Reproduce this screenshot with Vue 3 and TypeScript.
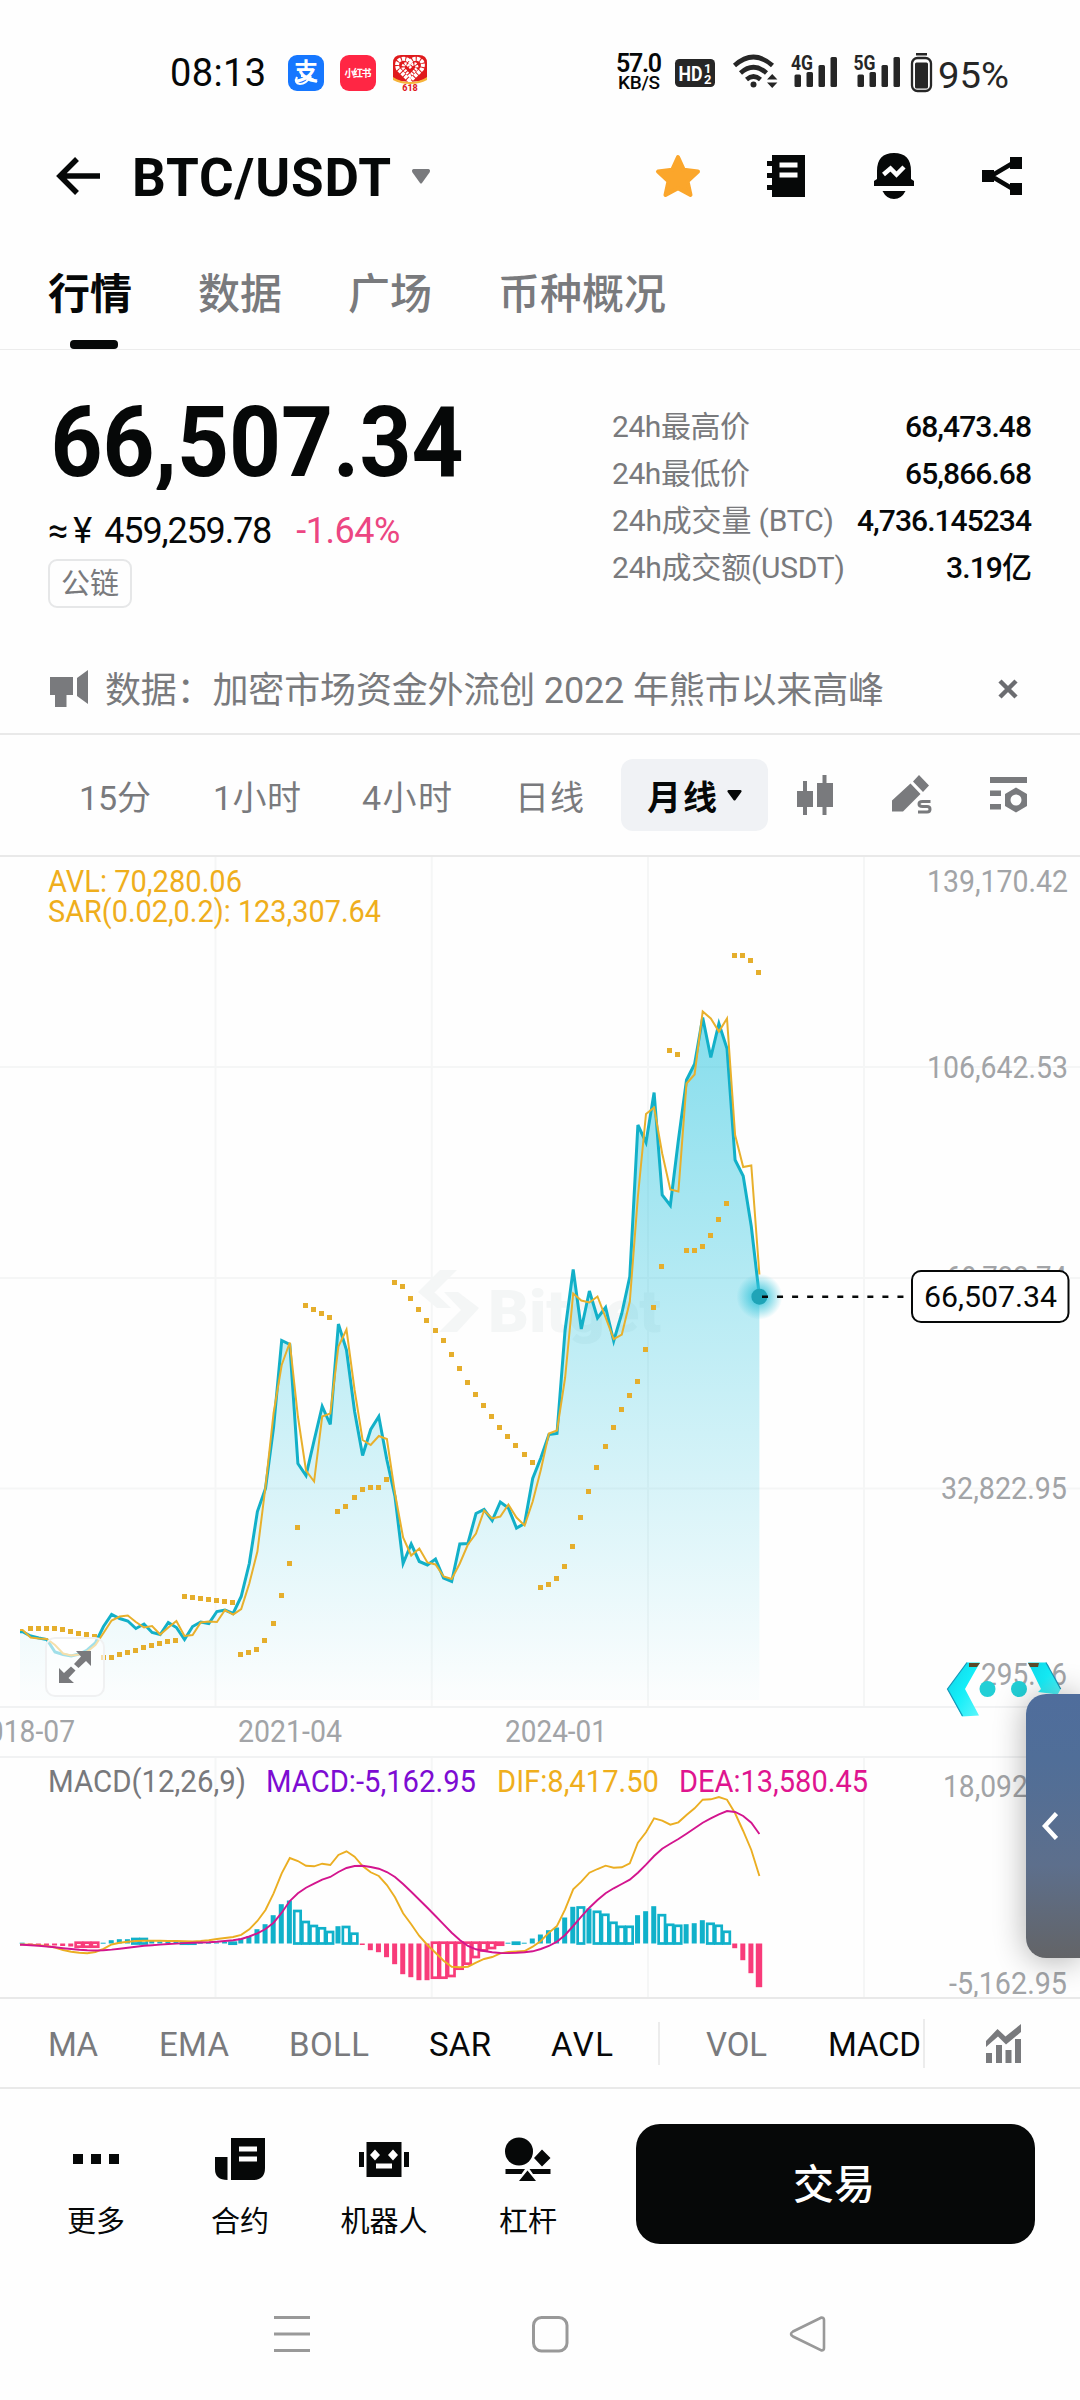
<script setup lang="ts">
import type { Directive } from 'vue'

// Tightens or loosens tracking so that a label takes the given width.
const vFit: Directive<HTMLElement, number> = {
  mounted(el, { value }) {
    const n = (el.textContent ?? '').length
    const w = el.getBoundingClientRect().width
    const ls = (value - w) / Math.max(1, n - 1)
    el.style.letterSpacing = `${ls}px`
    el.style.marginRight = `${-ls}px`
  },
}

const tabs = ['行情', '数据', '广场', '币种概况']

const stats = [
  { label: '24h最高价', lw: 138, value: '68,473.48', vw: 127 },
  { label: '24h最低价', lw: 138, value: '65,866.68', vw: 127 },
  { label: '24h成交量 (BTC)', lw: 222, value: '4,736.145234', vw: 175 },
  { label: '24h成交额(USDT)', lw: 233, value: '3.19亿', vw: 86 },
]

const frames = [
  { name: '15分', w: 72, gap: 0 },
  { name: '1小时', w: 88, gap: 62 },
  { name: '4小时', w: 90, gap: 61 },
  { name: '日线', w: 69, gap: 63 },
]

const indicators = [
  { name: 'MA', w: 50, gap: 0, on: false },
  { name: 'EMA', w: 70, gap: 61, on: false },
  { name: 'BOLL', w: 80, gap: 60, on: false },
  { name: 'SAR', w: 62, gap: 60, on: true },
  { name: 'AVL', w: 62, gap: 60, on: true },
]

const STEP = 8.097
const X_LAST = 759.4
const xAt = (i: number) => X_LAST - STEP * (91 - i)

const close = [
  1631.7, 1636, 1638, 1639.5, 1652, 1654.5, 1656, 1654, 1650, 1643, 1626.5, 1614.5, 1618.5, 1621, 1628.5, 1624,
  1632.5, 1634.5, 1622.5, 1627.5, 1639.5, 1626.5, 1622, 1623.5, 1611.5, 1610, 1613.5, 1596.5, 1563.5, 1511.5,
  1488.5, 1427, 1340.5, 1344.5, 1463.5, 1475.5, 1440.5, 1406.5, 1424.5, 1324, 1350, 1411.5, 1455.5, 1429.5,
  1416.5, 1460, 1496.5, 1563.5, 1544, 1561.5, 1565, 1559, 1578, 1581.5, 1544, 1543.5, 1513.5, 1509.5, 1520.5,
  1502, 1508, 1528, 1523.5, 1478.5, 1458, 1434.5, 1433.5, 1330, 1269.5, 1329, 1291, 1318, 1307.5, 1341, 1313.5,
  1276.5, 1125, 1142.5, 1092.5, 1195, 1205.5, 1140, 1080, 1064, 1017.5, 1057.5, 1023.5, 1048.5, 1160, 1176,
  1226.5, 1296.5,
]

const avl = [
  1630, 1637.5, 1638.5, 1639, 1645, 1653.5, 1655.5, 1654.5, 1651.5, 1645, 1633, 1620.5, 1616.5, 1615.5, 1622,
  1627.5, 1626, 1634.5, 1627.5, 1621, 1636, 1635, 1622.5, 1621.5, 1622, 1610, 1614.5, 1609, 1583.5, 1551.5,
  1486.5, 1413, 1365, 1342.5, 1416.5, 1470.5, 1481.5, 1416.5, 1413.5, 1346.5, 1329.5, 1390, 1440, 1445, 1436,
  1439, 1493.5, 1537.5, 1555.5, 1548.5, 1562.5, 1564.5, 1576.5, 1579, 1563.5, 1544.5, 1533.5, 1510.5, 1518.5,
  1516.5, 1504.5, 1517.5, 1525.5, 1501.5, 1470, 1433.5, 1430.5, 1378, 1293.5, 1300.5, 1302.5, 1296.5, 1317.5,
  1339, 1334.5, 1301.5, 1196.5, 1114, 1107.5, 1153.5, 1189.5, 1191.5, 1083.5, 1074.5, 1011.5, 1018.5, 1031.5,
  1018.5, 1135, 1167, 1165.5, 1274.5,
]

// Parabolic SAR, from the second month on.
const sar = [
  1628, 1628, 1628.7, 1628.7, 1629.7, 1631.3, 1633, 1634.3, 1636,
  1657.3, 1657, 1654.3, 1652, 1650, 1647.3, 1645.7, 1643.3, 1641.3, 1640,
  1596, 1597, 1598, 1599.7, 1600.3, 1601.7, 1602.7,
  1654, 1652.7, 1649, 1640, 1623.3, 1595.3, 1563, 1527,
  1305.3, 1309.3, 1313.3, 1317.3,
  1511, 1506.7, 1497.7, 1489, 1487.7, 1487.7, 1479.3,
  1282, 1286.3, 1298, 1309.3, 1320, 1330, 1340, 1354.3, 1368.3, 1382, 1394, 1405.3, 1416.7, 1427, 1436.7, 1445.7,
  1454, 1462.3,
  1587, 1584.3, 1578, 1566.7, 1546.3, 1517.3, 1491, 1467.7, 1446, 1427, 1409.3, 1395.7, 1381.3, 1349, 1307.7,
  1266.7,
  1050, 1054,
  1250.7, 1250.7, 1246, 1235, 1219, 1203.3,
  955.3, 955.3, 960.7, 972,
]

const dif = [
  1944.5, 1944.7, 1945.2, 1946, 1947.5, 1950, 1951.7, 1952.8, 1953.2, 1952, 1948.8, 1944.5, 1942.8, 1941.7, 1941,
  1940.8, 1940.7, 1940.8, 1941, 1941, 1941.3, 1941.5, 1941, 1940.3, 1939, 1938, 1937, 1934.8, 1929.3, 1921, 1910,
  1893.3, 1873.3, 1858, 1861, 1865.7, 1866.3, 1863.7, 1865, 1855, 1851.3, 1856.7, 1866, 1872.3, 1876, 1885,
  1897.3, 1913.3, 1924.3, 1936, 1945, 1952.7, 1960.7, 1966.7, 1967.3, 1966.7, 1962.7, 1959, 1957, 1953.3, 1952,
  1951.5, 1951, 1946.7, 1941, 1932.7, 1926, 1909.3, 1889.3, 1881.7, 1872.7, 1869, 1865.7, 1867.7, 1867.3, 1863.3,
  1842.7, 1832.3, 1818.3, 1820.7, 1824.7, 1822.3, 1815, 1808.3, 1799.7, 1799.3, 1797, 1799.7, 1813.3, 1831, 1850,
  1876,
]

const dea = [
  1944.7, 1945.2, 1945.8, 1946.5, 1947.3, 1948.2, 1949, 1949.7, 1950.2, 1950.5, 1950.2, 1949.6, 1948.7, 1947.7,
  1946.7, 1945.8, 1945.2, 1944.6, 1944, 1943.6, 1943.1, 1942.8, 1942.5, 1942.2, 1941.7, 1941, 1940.2, 1939,
  1936.5, 1933.3, 1929, 1922.7, 1912.7, 1901, 1893.3, 1887.7, 1883.7, 1879.7, 1877, 1872, 1868, 1866, 1865.7,
  1867, 1868.7, 1872, 1877, 1884, 1891.7, 1899.7, 1907.7, 1916, 1924.3, 1932.7, 1940, 1946, 1949.3, 1951, 1952.3,
  1953, 1953.1, 1952.8, 1952.3, 1951.3, 1949, 1946, 1941.7, 1935, 1926, 1916.7, 1907.7, 1900, 1893.3, 1888.3,
  1884, 1879.7, 1872.7, 1864.7, 1856, 1848.7, 1843.7, 1839, 1833.7, 1828.3, 1822.7, 1818.3, 1814.3, 1811, 1812,
  1816, 1822.7, 1834,
]

// Histogram heights; positive is up. A trailing "h" marks a hollow bar.
const hist = (
  '0.8 -1.5 -1.5 -2 -2 -2.5 -3 -4h -4h -4h 0.8 3.3 4.3 4.3 4.5h 4.5h 3 2 2 1.5 -0.7h -0.7h 0.8 0.8 1 1.5 -1h ' +
  '5 7.3 14.3 19.3 28.3 39.3 43 32.5h 21.5h 17.5h 15.2h 11.5h 17.3 16.5h 9.8h -1.5 -6.7 -8.7 -13.7 -20.7 -30.7 ' +
  '-33.7 -36.7 -36.7 -35h -35h -33.3h -26h -21h -14.3h -7.7h -5.3h -2h 0.8 -0.8h 0.8 5 9 13.3 16 26 36.7 36h ' +
  '35 31.7h 28.7h 20.7h 16.7h 16.7h 28.3 32.3 37.3 28.3h 18.7h 17.7h 19.3 20.3 23.3 19.7h 17.7h 11.7h -4.7 -16.7 ' +
  '-29.7 -43.7'
).split(' ')

const ZERO = 1943.5
const bars = hist.map((s, i) => {
  const v = parseFloat(s)
  const hollow = s.endsWith('h')
  const w = hollow || i === 91 ? 6.4 : 5
  return {
    x: xAt(i) - w / 2 - 0.4,
    w,
    y: v > 0 ? ZERO - v : ZERO - (hollow ? 0.8 : 0),
    h: Math.max(1, Math.abs(v)),
    hollow,
    color: v > 0 || Math.abs(v) < 1.2 ? '#10b1ca' : '#f83b7a',
  }
})

const line = (ys: number[]) => `20,${ys[0]} ` + ys.map((y, i) => `${xAt(i).toFixed(1)},${y}`).join(' ')
const area = `20,1700 ${line(close)} ${X_LAST},1700`

const gridX = [215.5, 431.8, 648, 864]
const gridY = [1067, 1278, 1488.5]

const axis = [
  { t: '139,170.42', x: 927, w: 141, y: 892 },
  { t: '106,642.53', x: 927, w: 141, y: 1078 },
  { t: '69,732.74', x: 946, w: 121, y: 1288 },
  { t: '32,822.95', x: 941, w: 126, y: 1499 },
  { t: '295.06', x: 981, w: 86, y: 1685 },
  { t: '18,092.78', x: 943, w: 124, y: 1797 },
  { t: '-5,162.95', x: 949, w: 118, y: 1994 },
  { t: '2018-07', x: -28, w: 103, y: 1742 },
  { t: '2021-04', x: 238, w: 104, y: 1742 },
  { t: '2024-01', x: 505, w: 102, y: 1742 },
]

const legend = [
  { t: 'AVL: 70,280.06', x: 48, w: 194, y: 892, c: '#efae1c' },
  { t: 'SAR(0.02,0.2): 123,307.64', x: 48, w: 333, y: 922, c: '#efae1c' },
  { t: 'MACD(12,26,9)', x: 48, w: 198, y: 1792, c: '#78797c' },
  { t: 'MACD:-5,162.95', x: 266, w: 210, y: 1792, c: '#7d0cd2' },
  { t: 'DIF:8,417.50', x: 497, w: 162, y: 1792, c: '#efae1c' },
  { t: 'DEA:13,580.45', x: 679, w: 189, y: 1792, c: '#df148f' },
]
</script>

<template>
  <div class="screen">
    <header class="status">
      <span v-fit="96" class="clock">08:13</span>
      <svg class="app alipay" width="36" height="36" viewBox="0 0 36 36">
        <rect width="36" height="36" rx="9" fill="#1677ff" />
        <text x="18" y="25" text-anchor="middle" font-size="24" font-weight="700" fill="#fff">支</text>
        <path d="M9 22q-3 6 3 7 6 0 11-8M13 21q8 0 16 6" fill="none" stroke="#fff" stroke-width="2.200" />
      </svg>
      <svg class="app" width="36" height="36" viewBox="0 0 36 36">
        <rect width="36" height="36" rx="9" fill="#ff2644" />
        <text x="4.500" y="22" textLength="27" font-size="10" font-weight="700" fill="#fff">小红书</text>
      </svg>
      <svg class="app" width="36" height="38" viewBox="0 0 36 38">
        <path d="M9 1h18q8 0 8 8v16q-8 3-17 3T1 25V9q0-8 8-8z" fill="#e01a1c" />
        <path d="M18 27L6 15q-3-8 4-10 5-1 8 3 3-4 8-3 7 2 4 10z" fill="none" stroke="#fff" stroke-width="4" stroke-dasharray="3.200 1" />
        <path d="M18 22l-7-8q0-5 4-4l3 3 3-3q4-1 4 4z" fill="none" stroke="#fff" stroke-width="3" stroke-dasharray="2 1" />
        <path d="M1 23q7 5 17 5t17-5v3q-7 4-17 4T1 26z" fill="#f6b43a" />
        <text x="18" y="37" text-anchor="middle" font-size="9" font-weight="800" fill="#e01a1c">618</text>
      </svg>
      <div class="speed">
        <b v-fit="46">57.0</b>
        <span v-fit="42">KB/S</span>
      </div>
      <svg class="sys" width="336" height="46" viewBox="672 50 336 46">
        <rect x="675" y="59" width="40" height="28" rx="4.500" fill="#262626" />
        <g fill="#fff" font-weight="700">
          <text x="678.500" y="81" font-size="21" textLength="24" lengthAdjust="spacingAndGlyphs">HD</text>
          <text x="704" y="73" font-size="13">1</text>
          <text x="704" y="84" font-size="13">2</text>
        </g>
        <g fill="none" stroke="#262626" stroke-width="4.600">
          <path d="M734.500 65.500Q753.500 48.500 772.500 65.500" />
          <path d="M740.500 73Q753.500 61.500 766.500 73" />
          <path d="M746.500 79.500Q753.500 73.500 760.500 79.500" />
        </g>
        <circle cx="753.500" cy="84.500" r="3" fill="#262626" />
        <path d="M767 79.500l5.200-5.500 5.200 5.500zM767 82.500l5.200 5.500 5.200-5.500z" fill="#262626" />
        <g fill="#262626" font-weight="700" font-size="20">
          <text x="791" y="70" textLength="22" lengthAdjust="spacingAndGlyphs">4G</text>
          <text x="853.500" y="70" textLength="22" lengthAdjust="spacingAndGlyphs">5G</text>
        </g>
        <g fill="#262626">
          <rect x="794.500" y="74.500" width="6.500" height="12.500" rx="1.500" />
          <rect x="806.500" y="72" width="6.500" height="15" rx="1.500" />
          <rect x="818.500" y="65" width="6.500" height="22" rx="1.500" />
          <rect x="830.500" y="57" width="6.500" height="30" rx="1.500" />
          <rect x="857.500" y="74.500" width="6.500" height="12.500" rx="1.500" />
          <rect x="869.500" y="72" width="6.500" height="15" rx="1.500" />
          <rect x="881.500" y="65" width="6.500" height="22" rx="1.500" />
          <rect x="893.500" y="57" width="6.500" height="30" rx="1.500" />
          <rect x="916" y="53" width="11" height="2.500" />
          <rect x="915" y="62.500" width="13" height="26" rx="1.500" />
        </g>
        <rect x="912" y="58" width="19" height="33" rx="5.500" fill="none" stroke="#262626" stroke-width="2.300" />
        <text x="938" y="87.500" font-size="37" fill="#262626" textLength="71" lengthAdjust="spacingAndGlyphs">95%</text>
      </svg>
    </header>

    <nav class="top">
      <svg width="44" height="38" viewBox="0 0 44 38" fill="none" stroke="#060808" stroke-width="5.500">
        <path d="M21 2L4 19l17 17M4 19h40" />
      </svg>
      <h1 v-fit="259">BTC/USDT</h1>
      <svg class="caret" width="20" height="15" viewBox="0 0 20 15"><path d="M2.500 0h15q2.500 1 1 3.500L11 14q-1 1-2 0L1.500 3.500Q0 1 2.500 0z" fill="#797a7d" /></svg>
      <svg class="star" width="46" height="44" viewBox="0 0 46 44">
        <path d="M23 3l5.800 12.800L43 17.500 32.500 27.300 35.500 41 23 34.300 10.500 41l3-13.700L3 17.500l14.200-1.700z" fill="#fba62b" stroke="#fba62b" stroke-width="4" stroke-linejoin="round" />
      </svg>
      <svg class="book" width="38" height="42" viewBox="0 0 38 42" fill="#060808">
        <path fill-rule="evenodd" d="M5 0h33v42H5v-7H0v-5h5v-7H0v-5h5v-7H0V6h5zM12.500 7.500v5h18v-5zM12.500 17.500v5h18v-5z" />
      </svg>
      <svg class="bell" width="40" height="46" viewBox="0 0 40 46" fill="#060808">
        <path d="M3 18Q3 0 20 0t17 18v8l3 2v5H0v-5l3-2zM8.500 38h23q-4 8-11.500 8T8.500 38z" />
        <path d="M9.500 21.500l7-6 6 6 7.500-7.500" fill="none" stroke="#fff" stroke-width="4.500" />
      </svg>
      <svg class="share" width="40" height="38" viewBox="0 0 40 38" fill="#060808">
        <path d="M28 0h12v12H28zM28 26h12v12H28zM0 13h12v12H0z" />
        <path d="M31 6L9 19l22 13" fill="none" stroke="#060808" stroke-width="4.500" />
      </svg>
    </nav>

    <div class="tabs">
      <span v-for="(t, i) in tabs" :key="t" :class="{ on: i === 0 }">{{ t }}</span>
    </div>

    <section class="summary">
      <div class="price">
        <svg class="last" width="430" height="100" viewBox="0 0 430 100">
          <text x="2.500" y="86" textLength="413" lengthAdjust="spacingAndGlyphs">66,507.34</text>
        </svg>
        <div class="fiat">
          <span v-fit="20">≈</span>
          <span class="yen">¥</span>
          <span v-fit="168" class="amount">459,259.78</span>
          <span v-fit="104" class="down">-1.64%</span>
        </div>
        <span class="tag">公链</span>
      </div>
      <dl class="stats">
        <div v-for="s in stats" :key="s.label">
          <dt v-fit="s.lw">{{ s.label }}</dt>
          <dd v-fit="s.vw">{{ s.value }}</dd>
        </div>
      </dl>
    </section>

    <div class="notice">
      <svg width="40" height="38" viewBox="0 0 40 38" fill="#797a7d">
        <path d="M0 7h23v18h-6.500v12H5V25H0zM27 8l11-8v34l-11-8z" />
      </svg>
      <p v-fit="779">数据：加密市场资金外流创 2022 年熊市以来高峰</p>
      <svg class="close" width="20" height="20" viewBox="0 0 20 20" stroke="#6b6c70" stroke-width="4.500">
        <path d="M2 2l16 16M18 2L2 18" />
      </svg>
    </div>

    <div class="frames">
      <span v-for="f in frames" :key="f.name" class="cell" :style="{ width: f.w + 'px', marginLeft: f.gap + 'px' }">
        <span v-fit="f.w">{{ f.name }}</span>
      </span>
      <div class="pill">
        <span v-fit="70">月线</span>
        <svg width="15" height="11" viewBox="0 0 15 11"><path d="M1.500 0h12q2 .5.500 2.500L8.500 10q-1 1-2 0L1 2.500Q-.5.5 1.500 0z" fill="#060808" /></svg>
      </div>
      <svg class="candle" width="37" height="40" viewBox="0 0 37 40" fill="#797a7d">
        <path d="M6 6h4v10h6v16h-6v8H6v-8H0V16h6zM25.500 0h4v8H36v24h-6.500v8h-4v-8H20V8h5.500z" />
      </svg>
      <svg class="pen" width="42" height="40" viewBox="0 0 42 40" fill="#797a7d">
        <path d="M0 36.500V25.500L18.500 8.500l10 10.500L11 36.500zM21 6.500L27 0l10 10.500-6 6.500z" />
        <path d="M38.500 26.500h-8q-3.500 0-3.500 2.500t3.500 2.500h4.500q3 0 3 2.700t-3 2.700h-9" fill="none" stroke="#797a7d" stroke-width="3" />
      </svg>
      <svg class="cfg" width="38" height="36" viewBox="0 0 38 36" fill="#797a7d">
        <path d="M0 0h37v6H0zM0 13.500h11v5.500H0zM0 27h11v5.500H0z" />
        <path fill-rule="evenodd" d="M26 10.500l11 6.500v12L26 35.500 15 29V17zM26 17.500a5.500 5.500 0 100 11 5.500 5.500 0 000-11z" />
      </svg>
    </div>

    <div class="chart">
      <svg width="1080" height="1142" viewBox="0 857 1080 1142">
        <defs>
          <linearGradient id="fill" gradientUnits="userSpaceOnUse" x1="0" y1="1010" x2="0" y2="1690">
            <stop offset="0" stop-color="#16bfdc" stop-opacity=".52" />
            <stop offset="1" stop-color="#16bfdc" stop-opacity=".015" />
          </linearGradient>
          <radialGradient id="glow">
            <stop offset="0.3" stop-color="#35c4da" stop-opacity=".75" />
            <stop offset="1" stop-color="#35c4da" stop-opacity="0" />
          </radialGradient>
          <linearGradient id="claw" x1="0" y1="0" x2="1" y2="1">
            <stop offset="0" stop-color="#0fd3e6" />
            <stop offset=".5" stop-color="#14eef8" />
            <stop offset="1" stop-color="#5ff6fb" />
          </linearGradient>
        </defs>

        <g stroke="#f5f6f6" stroke-width="2">
          <line v-for="x in gridX" :key="x" :x1="x" :x2="x" y1="857" y2="1707" />
          <line v-for="x in gridX" :key="'m' + x" :x1="x" :x2="x" y1="1757" y2="1998" />
          <line v-for="y in gridY" :key="y" x1="0" x2="1080" :y1="y" :y2="y" />
        </g>
        <g stroke="#f1f2f3" stroke-width="2">
          <path d="M0 1707H1080M0 1757H1080" />
        </g>

        <g fill="#f4f6f6">
          <path d="M440 1270h17l-22 22h-1l17 16h-14l-19-16zM444 1292h14l21 16-22 24h-18l22-22z" />
          <text x="488" y="1332" font-size="60" font-weight="900" textLength="173" lengthAdjust="spacingAndGlyphs">Bitget</text>
        </g>

        <g class="axis">
          <text v-for="a in axis" :key="a.t" :x="a.x" :y="a.y" :textLength="a.w" lengthAdjust="spacingAndGlyphs">{{ a.t }}</text>
        </g>

        <polygon :points="area" fill="url(#fill)" />
        <polyline :points="line(close)" fill="none" stroke="#12b0c8" stroke-width="3" />
        <polyline :points="line(avl)" fill="none" stroke="#e8b02c" stroke-width="2" />
        <rect v-for="(y, i) in sar" :key="i" :x="Math.round(xAt(i + 1) - 3)" :y="Math.round(y - 2.5)" width="5" height="5" fill="#e5ae2c" />

        <circle cx="759.400" cy="1296.700" r="23" fill="url(#glow)" />
        <circle cx="759.400" cy="1296.700" r="8" fill="#1fa4b7" />
        <line x1="762" x2="905" y1="1296.700" y2="1296.700" stroke="#060808" stroke-width="2.600" stroke-dasharray="6 9.050" />
        <rect x="912" y="1271" width="156.500" height="51" rx="9" fill="#fff" stroke="#060808" stroke-width="2" />
        <text x="924" y="1307" font-size="30" fill="#060808" textLength="133" lengthAdjust="spacingAndGlyphs">66,507.34</text>

        <rect
          v-for="(b, i) in bars"
          :key="'b' + i"
          :x="b.x"
          :y="b.y"
          :width="b.w"
          :height="b.h"
          :fill="b.hollow ? '#fff' : b.color"
          :stroke="b.hollow ? b.color : 'none'"
          stroke-width="2.700"
        />
        <polyline :points="line(dif)" fill="none" stroke="#ebae22" stroke-width="1.900" />
        <polyline :points="line(dea)" fill="none" stroke="#d3158e" stroke-width="1.900" />

        <g class="legend">
          <text v-for="l in legend" :key="l.t" :x="l.x" :y="l.y" :fill="l.c" :textLength="l.w" lengthAdjust="spacingAndGlyphs">{{ l.t }}</text>
        </g>

        <g>
          <path d="M967 1662.500h13L965 1689l14 26.500-17 1-14.500-27.500z" fill="url(#claw)" />
          <path d="M1028 1662.500h18l14.700 26.500-3 5.500-19.700-2.500 3-3z" fill="url(#claw)" />
          <path d="M967 1662.500L947.500 1689l15 27M1046 1662.500l14.700 26.500" fill="none" stroke="#1696b8" stroke-width="1.200" />
          <path d="M969 1663h11l-3 4h-8zM1028 1663h11l-1 4h-8z" fill="#5b4a2a" />
          <circle cx="987.500" cy="1689" r="8" fill="#22cfd6" />
          <circle cx="1019" cy="1689" r="8" fill="#22cfd6" />
        </g>
        <path d="M0 1998H1080" stroke="#e9e9e9" stroke-width="2" />
      </svg>
      <button class="expand" aria-label="expand">
        <svg width="32" height="32" viewBox="0 0 32 32" fill="#797a7d">
          <path d="M17 0h15v15l-5-5-7.500 7L15 13l7-7.500zM0 32V17l5 5 7-6.500 4.500 4L9.500 27l5.500 5z" />
        </svg>
      </button>
      <aside class="drawer">
        <svg width="16" height="28" viewBox="0 0 16 28" fill="none" stroke="#fff" stroke-width="4.500"><path d="M14.500 1.500L3 14l11.500 12.500" /></svg>
      </aside>
    </div>

    <div class="indicators">
      <span v-for="n in indicators" :key="n.name" class="cell" :class="{ on: n.on }" :style="{ width: n.w + 'px', marginLeft: n.gap + 'px' }">
        <span v-fit="n.w">{{ n.name }}</span>
      </span>
      <i class="sep"></i>
      <span class="cell vol"><span v-fit="61">VOL</span></span>
      <span class="cell on macd"><span v-fit="93">MACD</span></span>
      <i class="sep edge"></i>
      <svg class="more" width="36" height="39" viewBox="0 0 36 39" fill="#797a7d">
        <path d="M0 17L11.500 5l8 7.500L35 0v8L20 20.500l-8-8L0 23zM0 29h6v10H0zM10 21h6v18h-6zM19.500 26h6v13h-6zM29 15h6v24h-6z" />
      </svg>
    </div>

    <footer class="actions">
      <div class="act">
        <svg width="50" height="44" viewBox="0 0 50 44" fill="#060808"><path d="M2 17h10v10H2zM20 17h10v10H20zM38 17h10v10H38z" /></svg>
        <span>更多</span>
      </div>
      <div class="act">
        <svg width="50" height="44" viewBox="0 0 50 44" fill="#060808">
          <path fill-rule="evenodd" d="M16 1h34v30q0 12-12 12H16zM24 9.500v5h18v-5zM24 19.500v5h18v-5zM0 20h12.500v23Q0 43 0 32z" />
        </svg>
        <span>合约</span>
      </div>
      <div class="act">
        <svg width="50" height="44" viewBox="0 0 50 44" fill="#060808">
          <path fill-rule="evenodd" d="M7.500 5h35v35h-35zM16 12.500l-5 5.500 5 5.500 5-5.500zM34 12.500L29 18l5 5.500 5-5.500zM17 26.500v5h16v-5zM0 15h5v15H0zM45 15h5v15h-5z" />
        </svg>
        <span>机器人</span>
      </div>
      <div class="act">
        <svg width="50" height="44" viewBox="0 0 50 44" fill="#060808">
          <circle cx="16" cy="14.500" r="14" />
          <path d="M39 12.500l8.500 8.500-8.500 8.500-8-8.500zM2.500 32H22l-3.500 5h-16zM26.500 32h21v5H30zM24.500 33.500L33 44H16z" />
        </svg>
        <span>杠杆</span>
      </div>
      <button class="trade">交易</button>
    </footer>

    <div class="sysnav">
      <svg width="552" height="38" viewBox="274 2315 552 38" fill="none" stroke="#999" stroke-width="3">
        <path d="M274 2317.500h36M274 2334h36M274 2350.500h36" />
        <rect x="533.500" y="2317.500" width="33.500" height="33.500" rx="8" />
        <path d="M821.500 2317.500L793 2331.500q-4 2.500 0 5l28.500 14q2.500 0 2.500-2.500v-28q0-2.500-2.500-2.500z" stroke-width="2.600" />
      </svg>
    </div>
  </div>
</template>

<style>
body {
  margin: 0;
  background: #fefefe;
}
</style>

<style scoped>
.screen {
  width: 1080px;
  height: 2400px;
  overflow: hidden;
  background: #fefefe;
  color: #060808;
  font-family: Roboto, 'Noto Sans CJK SC', sans-serif;
  display: flex;
  flex-direction: column;
}
svg {
  display: block;
  flex: none;
}
span,
p,
h1,
dt,
dd {
  white-space: nowrap;
}
.status {
  height: 96px;
  padding: 25px 0 0 170px;
  display: flex;
  align-items: center;
}
.clock {
  font-size: 38px;
}
.app {
  margin-left: 16px;
}
.alipay {
  margin-left: 22px;
}
.speed {
  width: 46px;
  margin-left: 188px;
  display: flex;
  flex-direction: column;
  align-items: center;
  line-height: 19px;
  font-size: 19px;
  font-weight: 500;
}
.speed b {
  font-size: 25px;
  font-weight: 600;
}
.sys {
  margin-left: 10px;
}
.top {
  height: 110px;
  padding-left: 56px;
  display: flex;
  align-items: center;
}
.top h1 {
  margin: 3px 0 0 32px;
  font-size: 53px;
  font-weight: 700;
  line-height: 60px;
}
.caret {
  margin-left: 20px;
}
.star {
  margin-left: 224px;
}
.book {
  margin-left: 66px;
}
.bell {
  margin-left: 69px;
}
.share {
  margin-left: 68px;
}
.tabs {
  height: 118px;
  border-bottom: 1.500px solid #ececec;
  padding-left: 48px;
  display: flex;
  gap: 66px;
  font-size: 42px;
  font-weight: 500;
  color: #797a7d;
  line-height: 127px;
}
.tabs .on {
  color: #060808;
  font-weight: 700;
  display: flex;
  flex-direction: column;
  align-items: center;
  height: 118px;
}
.tabs .on::after {
  content: '';
  width: 48px;
  height: 9px;
  border-radius: 4px;
  background: #060808;
  margin: -18px 0 0 8px;
}
.summary {
  height: 295px;
  display: flex;
  justify-content: space-between;
  padding: 0 48px 0 48px;
}
.price {
  padding-top: 40px;
}
.last text {
  font-size: 99px;
  font-weight: 700;
  fill: #060808;
}
.fiat {
  display: flex;
  font-size: 36px;
  line-height: 44px;
  margin-top: 19px;
}
.yen {
  width: 20px;
  margin-left: 5px;
}
.amount {
  margin-left: 11px;
}
.fiat .down {
  margin-left: 24px;
  color: #ec4682;
}
.tag {
  display: block;
  box-sizing: border-box;
  width: 84px;
  height: 49px;
  margin-top: 6px;
  border: 2px solid #e6e7e8;
  border-radius: 9px;
  text-align: center;
  font-size: 29px;
  line-height: 47px;
  color: #797a7d;
}
.stats {
  width: 420px;
  margin: 53px 0 0;
}
.stats div {
  height: 47px;
  display: flex;
  justify-content: space-between;
  align-items: center;
  line-height: 47px;
  font-size: 30px;
}
.stats dt {
  color: #797a7d;
}
.stats dd {
  margin: 0;
  font-weight: 500;
}
.notice {
  height: 88px;
  border-bottom: 2px solid #e9e9e9;
  padding-left: 50px;
  display: flex;
  align-items: center;
  font-size: 36px;
  color: #797a7d;
}
.notice p {
  margin: 3px 0 0 15px;
  line-height: 44px;
}
.close {
  margin-left: 114px;
}
.frames {
  height: 120px;
  border-bottom: 2px solid #e9e9e9;
  padding-left: 79px;
  display: flex;
  align-items: center;
  font-size: 34px;
  color: #797a7d;
}
.pill {
  width: 147px;
  height: 72px;
  box-sizing: border-box;
  margin-left: 37px;
  padding-left: 26px;
  border-radius: 12px;
  background: #f0f2f5;
  color: #060808;
  font-weight: 600;
  display: flex;
  align-items: center;
}
.pill svg {
  margin-left: 10px;
}
.candle {
  margin-left: 29px;
}
.pen {
  margin-left: 58px;
}
.cfg {
  margin-left: 56px;
}
.chart {
  position: relative;
  height: 1142px;
  overflow: hidden;
}
.axis text,
.legend text {
  font-size: 30.500px;
}
.axis text {
  fill: #a2a4a7;
}
.expand {
  position: absolute;
  left: 45px;
  top: 780px;
  width: 60px;
  height: 60px;
  padding: 0;
  border: 2px solid #f0f1f2;
  border-radius: 10px;
  background: rgba(255, 255, 255, 0.6);
  display: flex;
  align-items: center;
  justify-content: center;
}
.drawer {
  position: absolute;
  left: 1026px;
  top: 837px;
  width: 54px;
  height: 264px;
  box-sizing: border-box;
  padding-left: 16px;
  border-radius: 20px 0 0 20px;
  background: linear-gradient(#4f6d9c, #506e98 25%, #5d6f8c 65%, #636467);
  box-shadow: 0 2px 32px rgba(0, 0, 0, 0.32);
  display: flex;
  align-items: center;
}
.indicators {
  height: 88px;
  border-bottom: 2px solid #e9e9e9;
  padding-left: 48px;
  display: flex;
  align-items: center;
  font-size: 33px;
  color: #797a7d;
}
.indicators .cell {
  margin-top: 3px;
}
.indicators .on {
  color: #060808;
}
.sep {
  width: 2px;
  height: 43px;
  background: #ececec;
  margin-left: 45px;
}
.vol {
  width: 62px;
  margin-left: 46px;
}
.macd {
  width: 94px;
  margin-left: 60px;
}
.sep.edge {
  height: 49px;
  margin-left: 1px;
}
.more {
  margin-left: 61px;
}
.actions {
  height: 191px;
  padding-left: 24px;
  display: flex;
}
.act {
  width: 144px;
  padding-top: 48px;
  display: flex;
  flex-direction: column;
  align-items: center;
  font-size: 29px;
  line-height: 40px;
}
.act span {
  margin-top: 21px;
}
.trade {
  width: 399px;
  height: 120px;
  margin: 35px 0 0 36px;
  padding: 0 3px 0 0;
  border: 0;
  border-radius: 24px;
  background: #060808;
  color: #fff;
  font: 500 41px/122px Roboto, 'Noto Sans CJK SC', sans-serif;
}
.sysnav {
  padding: 35px 0 0 274px;
}
</style>
